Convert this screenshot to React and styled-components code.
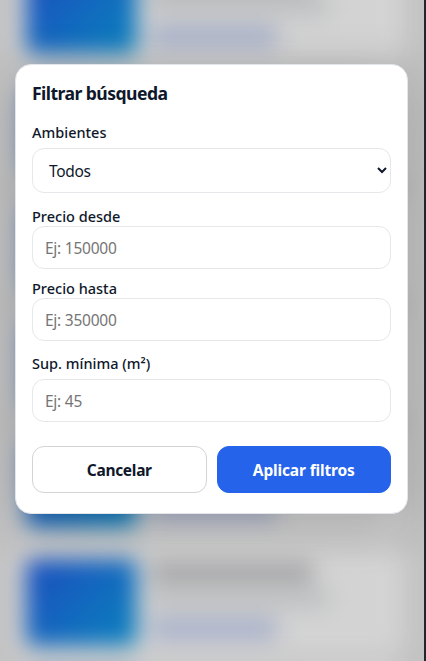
import React from "react";
import styled, { createGlobalStyle } from "styled-components";

const Global = createGlobalStyle`
  *, *::before, *::after { box-sizing: border-box; }
  html, body { margin: 0; height: 100%; overflow: hidden; background: #20262b; }
  body { font-family: "Noto Sans", "Open Sans", sans-serif; color: #0f172a; }
`;

const Page = styled.div`
  position: relative;
  width: 424px;
  height: 661px;
  overflow: hidden;
  background: #e6e6e6;
`;

const Results = styled.div`
  display: flex;
  flex-direction: column;
  gap: 10px;
  margin-top: -163px;
  padding: 0 20px 0 14px;
  filter: blur(11px);
`;

const Card = styled.div`
  display: flex;
  flex: none;
  gap: 14px;
  height: 108.3px;
  padding: 12px 12px 10px;
  border-radius: 16px;
  background: #f8f8f8;
`;

const Thumb = styled.div`
  flex: none;
  width: 111px;
  height: 87px;
  border-radius: 6px;
  background: linear-gradient(135deg, #205be0, #0c9ae0);
`;

const Summary = styled.div`
  display: flex;
  flex-direction: column;
  align-items: flex-start;
  padding-top: 4px;
`;

const Line = styled.div`
  width: ${(p) => p.$width}px;
  height: ${(p) => p.$height}px;
  margin-bottom: ${(p) => p.$gap}px;
  background: ${(p) => p.$color};
`;

const Overlay = styled.div`
  position: absolute;
  inset: 0;
  display: flex;
  align-items: flex-start;
  padding: 64px 16px 0 15px;
  background: rgba(0, 0, 0, 0.15);
`;

const Dialog = styled.form`
  display: flex;
  flex-direction: column;
  width: 393px;
  height: 450px;
  padding: 16px;
  border: 1px solid #e2e5ea;
  border-radius: 16px;
  background: #ffffff;
  box-shadow: 0 10px 50px rgba(0, 0, 0, 0.22);
`;

const Title = styled.h3`
  margin: 0 0 17px;
  font-size: 17.6px;
  line-height: 24px;
  font-weight: 700;
  letter-spacing: -0.56px;
`;

const Field = styled.label`
  display: flex;
  flex-direction: column;
  gap: ${(p) => p.$gap || 0}px;
  margin-bottom: ${(p) => p.$after}px;
`;

const Caption = styled.span`
  font-size: 14.5px;
  line-height: 20px;
  height: 20px;
  font-weight: 500;
`;

const control = `
  width: 100%;
  border: 1px solid #e5e7eb;
  border-radius: 12px;
  background: #ffffff;
  font-family: inherit;
  font-size: 15.5px;
  outline: none;
`;

const Select = styled.select`
  ${control}
  height: 45px;
  padding: 1px 12px 0;
  color: #0f172a;
  letter-spacing: -0.3px;
`;

const Input = styled.input`
  ${control}
  height: 43px;
  padding: 0 12px;
  letter-spacing: -0.25px;
  &::placeholder { color: #757575; }
`;

const Actions = styled.div`
  display: flex;
  gap: 10px;
`;

const Button = styled.button`
  flex: 1;
  height: 47px;
  padding: 1px 0 0;
  border: 1px solid ${(p) => (p.$primary ? "#2563eb" : "#d4d4d7")};
  border-radius: 12px;
  background: ${(p) => (p.$primary ? "#2563eb" : "#ffffff")};
  color: ${(p) => (p.$primary ? "#ffffff" : "#0f172a")};
  font-family: inherit;
  font-size: 15.5px;
  font-weight: 700;
  letter-spacing: ${(p) => (p.$primary ? -0.15 : -0.3)}px;
`;

export default function App() {
  return (
    <>
      <Global />
      <Page>
        <Results>
          {[0, 1, 2, 3, 4, 5, 6, 7].map((id) => (
            <Card key={id}>
              <Thumb />
              <Summary>
                <Line $width={162} $height={19} $gap={7} $color="#bdbdc0" />
                <Line $width={177} $height={18} $gap={11} $color="#dcdfe1" />
                <Line $width={126} $height={22} $gap={0} $color="#c6d0ee" />
              </Summary>
            </Card>
          ))}
        </Results>
        <Overlay>
          <Dialog>
            <Title>Filtrar búsqueda</Title>
            <Field $gap={6} $after={13}>
              <Caption>Ambientes</Caption>
              <Select defaultValue="todos">
                <option value="todos">Todos</option>
              </Select>
            </Field>
            <Field $after={9}>
              <Caption>Precio desde</Caption>
              <Input placeholder="Ej: 150000" />
            </Field>
            <Field $after={12}>
              <Caption>Precio hasta</Caption>
              <Input placeholder="Ej: 350000" />
            </Field>
            <Field $gap={6} $after={24}>
              <Caption>Sup. mínima (m²)</Caption>
              <Input placeholder="Ej: 45" />
            </Field>
            <Actions>
              <Button type="button">Cancelar</Button>
              <Button type="button" $primary>Aplicar filtros</Button>
            </Actions>
          </Dialog>
        </Overlay>
      </Page>
    </>
  );
}
